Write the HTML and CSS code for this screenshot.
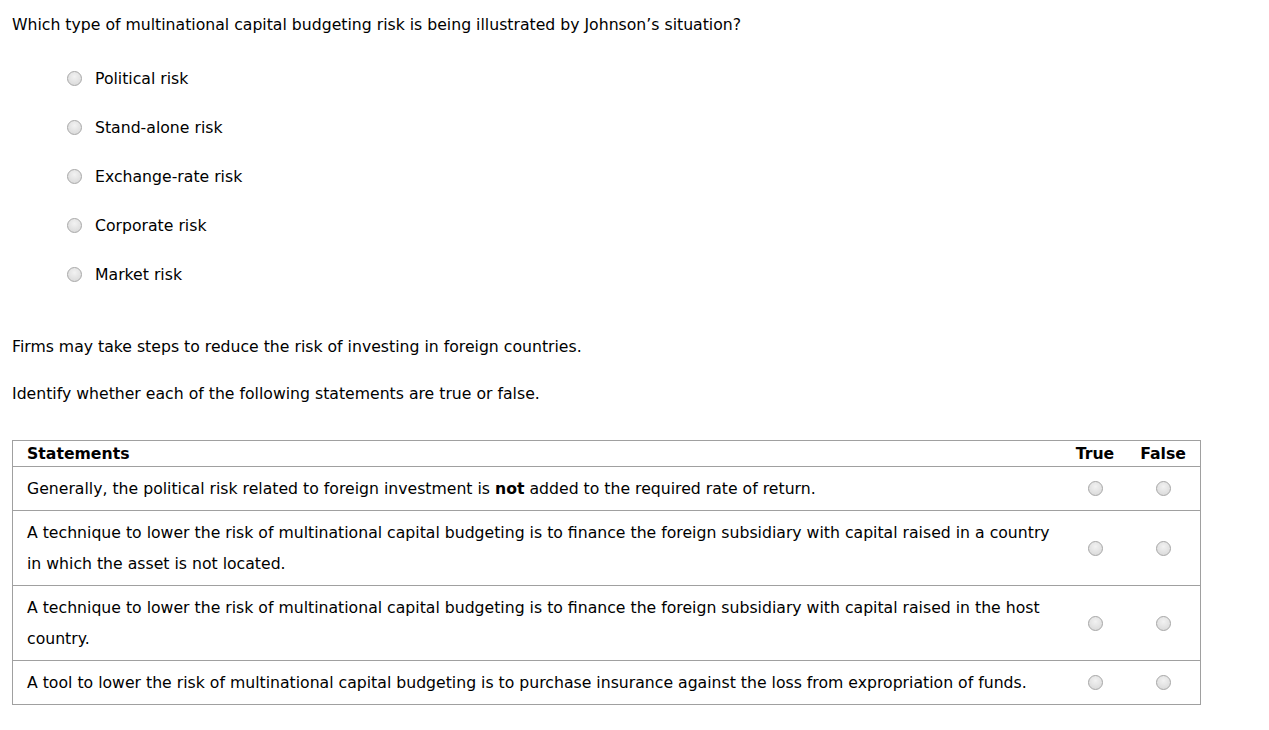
FILE: index.html
```html
<!DOCTYPE html>
<html>
<head>
<meta charset="utf-8">
<link rel="stylesheet" href="styles.css">
</head>
<body>
<div class="page">
  <p class="question">Which type of multinational capital budgeting risk is being illustrated by Johnson’s situation?</p>
  <ul class="options">
    <li class="option"><span class="radio"></span><span class="label">Political risk</span></li>
    <li class="option"><span class="radio"></span><span class="label">Stand-alone risk</span></li>
    <li class="option"><span class="radio"></span><span class="label">Exchange-rate risk</span></li>
    <li class="option"><span class="radio"></span><span class="label">Corporate risk</span></li>
    <li class="option"><span class="radio"></span><span class="label">Market risk</span></li>
  </ul>
  <p class="intro">Firms may take steps to reduce the risk of investing in foreign countries.</p>
  <p class="instruction">Identify whether each of the following statements are true or false.</p>
  <table class="tf">
    <thead>
      <tr>
        <th class="stmt">Statements</th>
        <th class="choice true-col">True</th>
        <th class="choice false-col">False</th>
      </tr>
    </thead>
    <tbody>
      <tr>
        <td class="stmt">Generally, the political risk related to foreign investment is <b>not</b> added to the required rate of return.</td>
        <td class="choice"><span class="radio"></span></td>
        <td class="choice"><span class="radio"></span></td>
      </tr>
      <tr>
        <td class="stmt">A technique to lower the risk of multinational capital budgeting is to finance the foreign subsidiary with capital raised in a country in which the asset is not located.</td>
        <td class="choice"><span class="radio"></span></td>
        <td class="choice"><span class="radio"></span></td>
      </tr>
      <tr>
        <td class="stmt">A technique to lower the risk of multinational capital budgeting is to finance the foreign subsidiary with capital raised in the host country.</td>
        <td class="choice"><span class="radio"></span></td>
        <td class="choice"><span class="radio"></span></td>
      </tr>
      <tr>
        <td class="stmt">A tool to lower the risk of multinational capital budgeting is to purchase insurance against the loss from expropriation of funds.</td>
        <td class="choice"><span class="radio"></span></td>
        <td class="choice"><span class="radio"></span></td>
      </tr>
    </tbody>
  </table>
</div>
</body>
</html>
```

FILE: styles.css
```css
html, body {
  margin: 0;
  padding: 0;
  background: #ffffff;
}

body {
  font-family: "DejaVu Sans", Verdana, sans-serif;
  font-size: 15.7px;
  color: #000000;
}

.page {
  padding: 15px 12px 0 12px;
}

p {
  margin: 0;
  line-height: 20px;
}

.question {
  margin-bottom: 19px;
}

.options {
  list-style: none;
  margin: 0;
  padding: 0 0 0 55px;
}

.option {
  display: flex;
  align-items: center;
  height: 49px;
  gap: 13px;
}

.radio {
  display: inline-block;
  width: 15px;
  height: 15px;
  box-sizing: border-box;
  border-radius: 50%;
  border: 1px solid #a8a8a8;
  background: radial-gradient(circle at 50% 35%, #f2f2f2 0%, #dedede 70%, #d2d2d2 100%);
  flex: none;
}

.intro {
  margin-top: 38px;
}

.instruction {
  margin-top: 27px;
}

.tf {
  margin-top: 36px;
  width: 1189px;
  border-collapse: collapse;
  border: 1px solid #a0a0a0;
}

.tf th, .tf td {
  padding: 0;
}

.tf thead tr,
.tf tbody tr {
  border-bottom: 1px solid #a0a0a0;
}

.tf th {
  font-weight: bold;
  height: 25px;
  line-height: 20px;
  vertical-align: middle;
}

.tf th.stmt {
  text-align: left;
  padding-left: 14px;
}

.tf td.stmt {
  padding: 6px 14px;
  line-height: 31px;
}

.tf .choice {
  text-align: center;
  vertical-align: middle;
}

.tf .true-col {
  width: 62px;
}

.tf .false-col {
  width: 74px;
}

.tf td.choice .radio {
  display: block;
  margin: 0 auto;
}
```
